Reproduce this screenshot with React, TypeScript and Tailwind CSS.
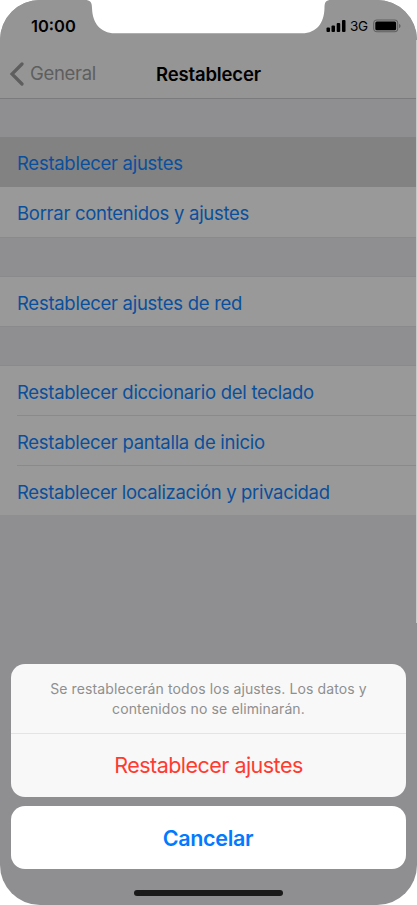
const groups = [
  {
    border: 'border-b',
    rows: [
      { label: 'Restablecer ajustes', className: 'h-[50px] pt-[3px] tracking-[-0.27px]', active: true },
      { label: 'Borrar contenidos y ajustes', className: 'h-[50px] pt-[3px] tracking-[-0.28px]' },
    ],
  },
  {
    border: 'border-y',
    rows: [{ label: 'Restablecer ajustes de red', className: 'h-[49px] pt-[4px] tracking-[-0.27px]' }],
  },
  {
    border: 'border-t',
    rows: [
      { label: 'Restablecer diccionario del teclado', className: 'h-[50px] border-b pt-[5px] tracking-[-0.29px]' },
      { label: 'Restablecer pantalla de inicio', className: 'h-[50px] border-b pt-[5px] tracking-[-0.28px]' },
      { label: 'Restablecer localización y privacidad', className: 'h-[49px] pt-[5px] tracking-[-0.33px]' },
    ],
  },
]

function StatusBar() {
  return (
    <div className="relative h-[50px] shrink-0">
      {/* notch */}
      <svg className="absolute top-0 left-0" width="417" height="34" viewBox="0 0 417 34" fill="#fff">
        <path d="M85 0C90 0 92 2 92 8C92.500 23 100 33 115 33.300H302C317 33 324 23 324.500 8C324.500 2 326 0 331 0Z" />
      </svg>
      <div className="relative flex items-center justify-between pt-4 pl-[31px] pr-[16px]">
        <span className="text-[16.5px] leading-5 font-semibold">10:00</span>
        <div className="flex items-center">
          <svg width="20" height="12" viewBox="0 0 20 12">
            <rect x="0.500" y="7.500" width="3.500" height="4.500" rx="1" />
            <rect x="5.500" y="5.500" width="3.500" height="6.500" rx="1" />
            <rect x="10.700" y="3" width="3.500" height="9" rx="1" />
            <rect x="16" y="0" width="3.500" height="12" rx="1" />
          </svg>
          <span className="ml-[4px] mr-[5px] text-[13.5px] leading-5 tracking-[-0.2px]">3G</span>
          <svg width="28" height="14" viewBox="0 0 28 14">
            <rect x="0.700" y="1" width="24" height="11.800" rx="3.200" fill="none" stroke="#606060" strokeWidth="1.100" />
            <rect x="2.300" y="2.600" width="20.800" height="8.600" rx="1.500" />
            <path d="M26 5C28 5.600 28 8.400 26 9Z" fill="#606060" />
          </svg>
        </div>
      </div>
    </div>
  )
}

function NavBar() {
  return (
    <div className="grid h-[49px] shrink-0 grid-cols-3 items-center border-b border-[#7b7b7d]">
      <div className="flex items-center pl-[10px] text-[#5e5e5e]">
        <svg width="14" height="24" viewBox="0 0 14 24" fill="none" stroke="currentColor" strokeWidth="3.200" strokeLinecap="round">
          <path d="M12 2L2 12L12 22" />
        </svg>
        <span className="ml-[6px] text-[18.500px] tracking-[-0.3px]">General</span>
      </div>
      <h1 className="pt-px text-center text-[18.500px] font-semibold tracking-[-0.15px] whitespace-nowrap">Restablecer</h1>
    </div>
  )
}

function ActionSheet() {
  return (
    <div className="absolute inset-x-[11px] top-[664px] flex flex-col gap-[9px] text-center">
      <div className="overflow-hidden rounded-[14px] bg-[#f8f8f8]">
        <p className="h-[70px] border-b border-[#e4e4e5] pt-[15px] text-[14px] leading-5 tracking-[0.12px] text-[#8f8f8f]">
          Se restablecerán todos los ajustes. Los datos y
          <br />
          contenidos no se eliminarán.
        </p>
        <button className="h-[63px] w-full text-[21.500px] tracking-[-0.53px] text-[#ff3b30]">
          Restablecer ajustes
        </button>
      </div>
      <button className="h-[63px] rounded-[14px] bg-white pt-0.5 pr-px text-[21.500px] font-semibold tracking-[-0.3px] text-[#007aff]">
        Cancelar
      </button>
    </div>
  )
}

export default function App() {
  return (
    <div className="h-[905px] w-[417px] overflow-hidden bg-white font-['Inter',sans-serif]">
      <main className="relative flex h-full flex-col overflow-hidden rounded-[40px] bg-[#8f8f92] text-black">
        <header className="bg-[#959595]">
          <StatusBar />
          <NavBar />
        </header>
        {groups.map((group, i) => (
          <section key={i} className={`mt-[38px] border-[#8a8a8c] bg-[#999] ${group.border}`}>
            {group.rows.map((row) => (
              <div key={row.label} className={`pl-[17px] ${'active' in row ? 'bg-[#828282]' : ''}`}>
                <div
                  className={`flex items-center border-[#8a8a8c] text-[18.500px] whitespace-nowrap text-[#0a4f9c] ${row.className}`}
                >
                  {row.label}
                </div>
              </div>
            ))}
          </section>
        ))}
        <ActionSheet />
        {/* home indicator */}
        <div className="absolute bottom-[9px] left-[134px] h-[6px] w-[149px] rounded-full bg-[#1a1a1a]" />
        <div className="absolute top-[40px] right-0 h-[583px] w-px bg-[#c8c8c8]" />
      </main>
    </div>
  )
}
